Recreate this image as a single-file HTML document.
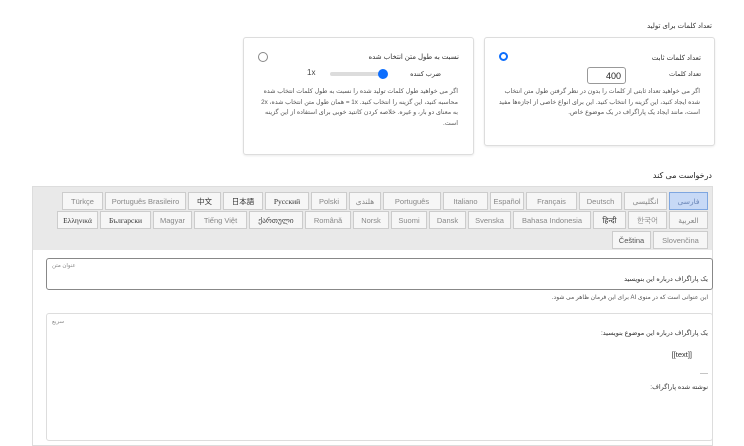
<!DOCTYPE html>
<html><head><meta charset="utf-8"><style>
body{margin:0;width:744px;height:440px;background:#fff;position:relative;overflow:hidden;font-family:"Liberation Sans","DejaVu Sans",sans-serif;color:#333}
.a{position:absolute}
.card{position:absolute;border:1px solid #ddd;border-radius:3px;background:#fff;box-shadow:0 1px 2px rgba(0,0,0,.08)}
.t{position:absolute;font-size:7px;color:#333;direction:rtl;white-space:nowrap}
.p{position:absolute;font-size:6.3px;color:#555;direction:rtl;line-height:10.5px}
.tab{position:absolute;height:18px;border:1px solid #ccc;background:#f6f6f6;font-size:7.5px;color:#888;text-align:center;line-height:18px;box-sizing:border-box;white-space:nowrap;overflow:hidden}
</style></head><body>
<div class="t" style="right:32px;top:22px;font-size:7px">تعداد کلمات برای تولید</div>

<div class="card" style="left:243px;top:37px;width:229px;height:116px"></div>
<div class="a" style="left:258px;top:52px;width:8px;height:8px;border:1px solid #888;border-radius:50%"></div>
<div class="t" style="right:285px;top:53px">نسبت به طول متن انتخاب شده</div>
<div class="t" style="right:303px;top:70px;font-size:6.5px">ضرب کننده</div>
<div class="a" style="left:307px;top:68px;font-size:8px;color:#444">1x</div>
<div class="a" style="left:330px;top:72px;width:53px;height:4px;background:#dcdcdc;border-radius:2px"></div>
<div class="a" style="left:378px;top:69px;width:10px;height:10px;background:#0d6efd;border-radius:50%"></div>
<div class="p" style="left:258px;top:87px;width:200px">اگر می خواهید طول کلمات تولید شده را نسبت به طول کلمات انتخاب شده محاسبه کنید، این گزینه را انتخاب کنید. 1x = همان طول متن انتخاب شده، 2x به معنای دو بار، و غیره. خلاصه کردن کانتید خوبی برای استفاده از این گزینه است.</div>

<div class="card" style="left:484px;top:37px;width:229px;height:107px"></div>
<div class="a" style="left:499px;top:52px;width:5px;height:5px;border:2.5px solid #0d6efd;border-radius:50%"></div>
<div class="t" style="right:43px;top:54px">تعداد کلمات ثابت</div>
<div class="t" style="right:43px;top:70px;font-size:6.5px">تعداد کلمات</div>
<div class="a" style="left:587px;top:67px;width:39px;height:17px;border:1px solid #999;border-radius:3px;font-size:9px;line-height:17px;text-align:right;box-sizing:border-box;padding-right:4px;color:#222">400</div>
<div class="p" style="left:498px;top:87px;width:202px">اگر می خواهید تعداد ثابتی از کلمات را بدون در نظر گرفتن طول متن انتخاب شده ایجاد کنید، این گزینه را انتخاب کنید. این برای انواع خاصی از اجازه‌ها مفید است، مانند ایجاد یک پاراگراف در یک موضوع خاص.</div>

<div class="t" style="right:32px;top:171px;font-size:8px;color:#222">درخواست می کند</div>
<div class="a" style="left:32px;top:186px;width:681px;height:260px;border:1px solid #ddd;box-sizing:border-box"></div>
<div class="a" style="left:33px;top:187px;width:679px;height:63px;background:#e9e9e9"></div>

<div class="tab" style="left:669px;top:192px;width:39px;background:#c7d9f6;border-color:#7ea6e0;color:#6a86b8">فارسی</div>
<div class="tab" style="left:624px;top:192px;width:43px">انگلیسی</div>
<div class="tab" style="left:579px;top:192px;width:43px">Deutsch</div>
<div class="tab" style="left:526px;top:192px;width:51px">Français</div>
<div class="tab" style="left:490px;top:192px;width:34px">Español</div>
<div class="tab" style="left:443px;top:192px;width:45px">Italiano</div>
<div class="tab" style="left:383px;top:192px;width:58px">Português</div>
<div class="tab" style="left:349px;top:192px;width:32px">هلندی</div>
<div class="tab" style="left:311px;top:192px;width:36px">Polski</div>
<div class="tab" style="left:265px;top:192px;width:44px;color:#333;font-family:'Liberation Serif',serif">Русский</div>
<div class="tab" style="left:223px;top:192px;width:40px;color:#333;font-family:'Liberation Sans','Noto Sans CJK JP',sans-serif">日本語</div>
<div class="tab" style="left:188px;top:192px;width:33px;color:#333;font-family:'Liberation Sans','Noto Sans CJK SC',sans-serif">中文</div>
<div class="tab" style="left:105px;top:192px;width:81px">Português Brasileiro</div>
<div class="tab" style="left:62px;top:192px;width:41px">Türkçe</div>

<div class="tab" style="left:669px;top:211px;width:39px">العربية</div>
<div class="tab" style="left:628px;top:211px;width:39px;font-family:'Liberation Sans','NanumGothic',sans-serif">한국어</div>
<div class="tab" style="left:593px;top:211px;width:33px;color:#333">हिन्दी</div>
<div class="tab" style="left:513px;top:211px;width:78px">Bahasa Indonesia</div>
<div class="tab" style="left:468px;top:211px;width:43px">Svenska</div>
<div class="tab" style="left:429px;top:211px;width:37px">Dansk</div>
<div class="tab" style="left:391px;top:211px;width:36px">Suomi</div>
<div class="tab" style="left:353px;top:211px;width:36px">Norsk</div>
<div class="tab" style="left:305px;top:211px;width:46px">Română</div>
<div class="tab" style="left:249px;top:211px;width:54px;color:#444">ქართული</div>
<div class="tab" style="left:194px;top:211px;width:53px">Tiếng Việt</div>
<div class="tab" style="left:153px;top:211px;width:39px">Magyar</div>
<div class="tab" style="left:100px;top:211px;width:51px;color:#333;font-family:'Liberation Serif',serif">Български</div>
<div class="tab" style="left:57px;top:211px;width:41px;color:#333;font-family:'Liberation Serif',serif">Ελληνικά</div>

<div class="tab" style="left:653px;top:231px;width:55px">Slovenčina</div>
<div class="tab" style="left:612px;top:231px;width:39px;color:#555">Čeština</div>

<div class="a" style="left:46px;top:258px;width:667px;height:32px;border:1px solid #888;border-radius:3px;box-sizing:border-box"></div>
<div class="t" style="left:52px;top:263px;font-size:5.5px;color:#888">عنوان متن</div>
<div class="t" style="right:36px;top:275px;font-size:6.5px">یک پاراگراف درباره این بنویسید</div>
<div class="t" style="right:36px;top:294px;font-size:6px;color:#555">این عنوانی است که در منوی AI برای این فرمان ظاهر می شود.</div>

<div class="a" style="left:46px;top:313px;width:667px;height:128px;border:1px solid #ddd;border-radius:3px;box-sizing:border-box"></div>
<div class="t" style="left:52px;top:319px;font-size:5.5px;color:#888">سریع</div>
<div class="t" style="right:36px;top:329px;font-size:6.5px">یک پاراگراف درباره این موضوع بنویسید:</div>
<div class="a" style="right:52px;top:350px;font-size:7.5px;color:#333">[[text]]</div>
<div class="a" style="right:36px;top:371px;font-size:6px;color:#666">----</div>
<div class="t" style="right:36px;top:383px;font-size:6.5px">نوشته شده پاراگراف:</div>
</body></html>
